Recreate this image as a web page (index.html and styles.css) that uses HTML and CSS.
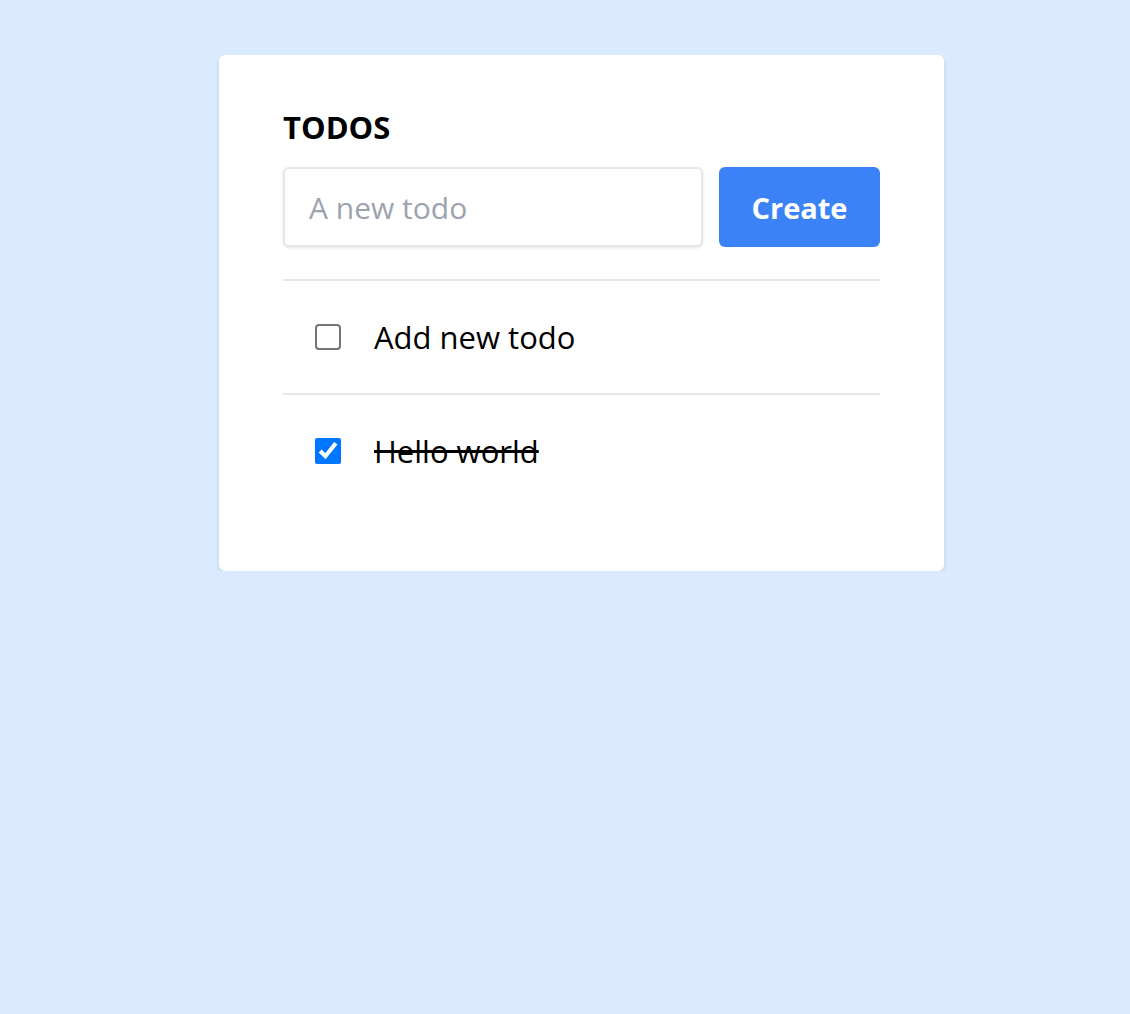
FILE: index.html
```html
<!DOCTYPE html>
<html>
<head>
<meta charset="utf-8">
<link rel="stylesheet" href="styles.css">
</head>
<body>
<div class="page">
  <div class="card">
    <h1 class="title">TODOS</h1>
    <form class="new-form">
      <input class="new-input" type="text" placeholder="A new todo">
      <button class="create-btn" type="button">Create</button>
    </form>
    <ul class="list">
      <li class="item"><input class="check" type="checkbox"><span class="label">Add new todo</span></li>
      <li class="item"><input class="check" type="checkbox" checked><span class="label done">Hello world</span></li>
    </ul>
  </div>
</div>
</body>
</html>
```

FILE: styles.css
```css
html, body {
  margin: 0;
  padding: 0;
  background: #dbeafe;
  font-family: "Open Sans", "Noto Sans", sans-serif;
}
.page {
  padding-top: 55px;
  padding-left: 219px;
}
.card {
  width: 725px;
  box-sizing: border-box;
  background: #ffffff;
  border-radius: 6px;
  box-shadow: 0 4px 6px -1px rgba(0,0,0,0.1), 0 2px 4px -1px rgba(0,0,0,0.06);
  padding: 52px 64px 64px 64px;
}
.title {
  margin: 0 0 20px 0;
  font-size: 31px;
  font-weight: 700;
  line-height: 40px;
  color: #000;
}
.new-form {
  display: flex;
  gap: 16px;
  margin: 0;
}
.new-input {
  flex: 1 1 auto;
  min-width: 0;
  height: 80px;
  box-sizing: border-box;
  border: 2px solid #e5e7eb;
  border-radius: 6px;
  box-shadow: 0 1px 3px rgba(0,0,0,0.1);
  padding: 0 24px;
  font-family: inherit;
  font-size: 30px;
  color: #000;
  outline: none;
}
.new-input::placeholder {
  color: #9ca3af;
}
.create-btn {
  flex: 0 0 161px;
  height: 80px;
  border: none;
  border-radius: 6px;
  background: #3b82f6;
  color: #fff;
  font-family: inherit;
  font-size: 29px;
  font-weight: 700;
  padding: 0;
}
.list {
  list-style: none;
  margin: 32px 0 0 0;
  padding: 0;
}
.item {
  display: flex;
  align-items: center;
  gap: 33px;
  border-top: 2px solid #e5e7eb;
  padding: 38px 32px;
  line-height: 36px;
  font-size: 31px;
}
.check {
  width: 26px;
  height: 26px;
  margin: 0;
  flex: 0 0 26px;
}
.check:not(:checked) {
  appearance: none;
  -webkit-appearance: none;
  box-sizing: border-box;
  border: 2px solid #767676;
  border-radius: 4px;
  background: #fff;
}
.label {
  color: #000;
}
.done {
  text-decoration: line-through;
}
```
